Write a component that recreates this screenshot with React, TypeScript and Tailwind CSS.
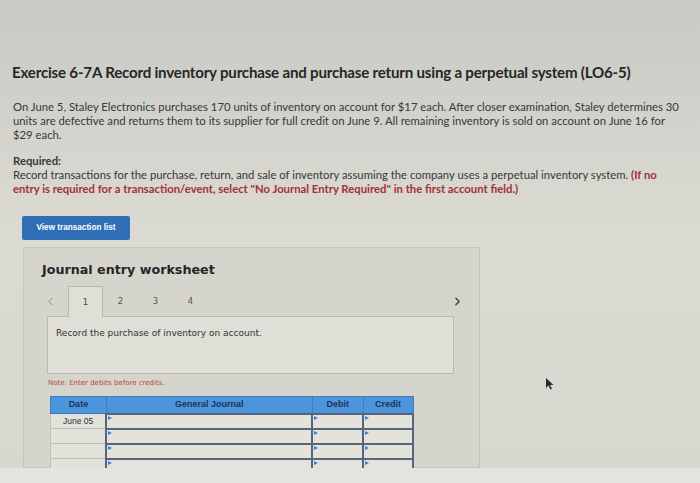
import { ChevronLeft, ChevronRight } from "lucide-react";

// Journal rows shown under the header
const rows = ["June 05", "", "", ""];
const tabs = ["1", "2", "3", "4"];

function Marker() {
  return (
    <span className="absolute left-[1px] top-[1px] h-0 w-0 border-l-[4px] border-t-[2px] border-b-[2px] border-l-[#3d7fd0] border-t-transparent border-b-transparent" />
  );
}

export default function App() {
  return (
    <div className="relative h-[483px] w-[700px] overflow-hidden bg-gradient-to-b from-[#c9c9c5] via-[#dcdbd3] to-[#d8d7cf] font-['Lato',sans-serif] text-[#2b2b2b]">
      <div className="pl-[12px] pr-[8px] pt-[62px]">
        <h1 className="text-[15.1px] font-bold leading-[20px] tracking-[-0.2px] text-[#262626]">
          Exercise 6-7A Record inventory purchase and purchase return using a perpetual system (LO6-5)
        </h1>

        <p className="mt-[18px] w-[671px] pl-[1px] text-[11.3px] leading-[14px] text-[#383838]">
          On June 5, Staley Electronics purchases 170 units of inventory on account for $17 each. After closer examination, Staley determines 30 units are defective and returns them to its supplier for full credit on June 9. All remaining inventory is sold on account on June 16 for $29 each.
        </p>

        <div className="mt-[12px] pl-[1px] pr-[20px] text-[11.3px] leading-[14px] text-[#383838]">
          <div className="font-bold">Required:</div>
          <p>
            Record transactions for the purchase, return, and sale of inventory assuming the company uses a perpetual inventory system.{" "}
            <span className="font-bold text-[#a3303a]">
              (If no entry is required for a transaction/event, select "No Journal Entry Required" in the first account field.)
            </span>
          </p>
        </div>

        <button className="ml-[10px] mt-[20px] flex h-[24px] w-[108px] items-center justify-center rounded-[2px] bg-[#2f6fb5] font-['Liberation_Sans',sans-serif] text-[8.2px] font-bold text-white">
          View transaction list
        </button>

        {/* worksheet panel */}
        <div className="ml-[11px] mt-[7px] h-[221px] w-[457px] border border-[#c6c5bd] bg-[#d6d5cd] font-['DejaVu_Sans',sans-serif]">
          <div className="pl-[18px] pt-[13px] text-[12.7px] font-bold leading-[18px] text-[#262626]">
            Journal entry worksheet
          </div>

          <div className="ml-[20px] mt-[7px] flex h-[30px] w-[420px] items-center">
            <ChevronLeft className="h-[13px] w-[13px] text-[#8a8a8a]" strokeWidth={1.8} />
            <div className="ml-[11px] flex h-full items-stretch">
              {tabs.map((t, i) => (
                <div
                  key={t}
                  className={
                    i === 0
                      ? "relative z-10 -mb-px flex w-[35px] items-center justify-center border border-b-0 border-[#b9b8b0] bg-[#dfded7] text-[8.5px] text-[#444]"
                      : "flex w-[35px] items-center justify-center text-[8.5px] text-[#555]"
                  }
                >
                  {t}
                </div>
              ))}
            </div>
            <ChevronRight className="ml-auto h-[13px] w-[13px] text-[#3a3a3a]" strokeWidth={2.5} />
          </div>

          <div className="ml-[23px] h-[58px] w-[407px] border border-[#bab9b1] bg-[#dfded7] px-[8px] pt-[10px] text-[9px] text-[#333]">
            Record the purchase of inventory on account.
          </div>

          <div className="ml-[24px] mt-[4px] text-[7px] leading-[10px] text-[#b4483c]">
            Note: Enter debits before credits.
          </div>

          <table className="ml-[26px] mt-[8px] w-[364px] border-collapse font-['Liberation_Sans',sans-serif] text-[9px]">
            <thead>
              <tr className="h-[17px] bg-[#4c94db] font-bold text-[#1c3558]">
                <th className="w-[56px] border border-[#3e7cc0] font-bold">Date</th>
                <th className="w-[207px] border border-[#3e7cc0] font-bold">General Journal</th>
                <th className="w-[51px] border border-[#3e7cc0] font-bold">Debit</th>
                <th className="w-[50px] border border-[#3e7cc0] font-bold">Credit</th>
              </tr>
            </thead>
            <tbody>
              {rows.map((d, i) => (
                <tr key={i} className="h-[15px]">
                  <td className="border border-[#c2c1b9] bg-[#e2e1da] text-center text-[8.5px] text-[#333]">{d}</td>
                  <td className="relative border-2 border-[#55657c] bg-[#e3e2db]">
                    <Marker />
                  </td>
                  <td className="relative border-2 border-[#55657c] bg-[#e3e2db]">
                    <Marker />
                  </td>
                  <td className="relative border-2 border-[#55657c] bg-[#e3e2db]">
                    <Marker />
                  </td>
                </tr>
              ))}
            </tbody>
          </table>
        </div>
      </div>

      {/* mouse pointer */}
      <svg className="absolute left-[545px] top-[378px]" width="9" height="12" viewBox="0 0 9 12">
        <path d="M1 0 L1 10 L3.5 7.5 L5.5 11.5 L7 10.8 L5 7 L8.5 7 Z" fill="#2a2a2a" />
      </svg>

      {/* bottom bezel strip */}
      <div className="absolute bottom-0 left-0 h-[15px] w-full bg-[#e4e3dd]" />
    </div>
  );
}
